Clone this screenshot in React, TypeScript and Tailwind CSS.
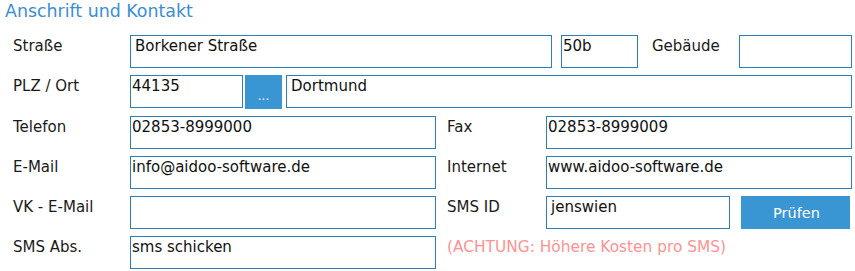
import React from "react";

const font = "font-['DejaVu_Sans',Verdana,sans-serif]";

const Box = ({ w, value, pad = "pl-[1px]" }: { w: string; value?: string; pad?: string }) => (
  <div className={`${w} h-[33px] shrink-0 border border-[#2f7db9] bg-white pt-[1px] ${pad} text-[15px] leading-[18px] text-[#111] whitespace-nowrap overflow-hidden`}>
    {value}
  </div>
);

const Label = ({ w, text }: { w: string; text: string }) => (
  <div className={`${w} shrink-0 pt-[2px] text-[15px] leading-[18px] text-[#1a1a1a]`}>{text}</div>
);

export default function App() {
  return (
    <div className={`w-[855px] h-[271px] bg-white ${font}`}>
      <div className="h-[35px] pl-[5px] pt-[1px] text-[17.4px] leading-[20px] text-[#3a8fd0]">
        Anschrift und Kontakt
      </div>

      <div className="flex flex-col gap-[7px] pl-[13px]">
        {/* Straße */}
        <div className="flex">
          <Label w="w-[117px]" text="Straße" />
          <Box w="w-[422px]" value="Borkener Straße" pad="pl-[4px]" />
          <div className="w-[9px]" />
          <Box w="w-[77px]" value="50b" pad="pl-[1px]" />
          <div className="w-[14px]" />
          <Label w="w-[87px]" text="Gebäude" />
          <Box w="w-[113px]" />
        </div>

        {/* PLZ / Ort */}
        <div className="flex">
          <Label w="w-[117px]" text="PLZ / Ort" />
          <Box w="w-[113px]" value="44135" />
          <div className="w-[2px]" />
          <div className="w-[37px] h-[34px] shrink-0 bg-[#3a95d3] pt-[13px] text-center text-[12px] leading-[16px] text-white">
            ...
          </div>
          <div className="w-[4px]" />
          <Box w="w-[566px]" value="Dortmund" pad="pl-[4px]" />
        </div>

        {/* Telefon / Fax */}
        <div className="flex">
          <Label w="w-[117px]" text="Telefon" />
          <Box w="w-[306px]" value="02853-8999000" />
          <div className="w-[11px]" />
          <Label w="w-[99px]" text="Fax" />
          <Box w="w-[306px]" value="02853-8999009" />
        </div>

        {/* E-Mail / Internet */}
        <div className="flex">
          <Label w="w-[117px]" text="E-Mail" />
          <Box w="w-[306px]" value="info@aidoo-software.de" />
          <div className="w-[11px]" />
          <Label w="w-[99px]" text="Internet" />
          <Box w="w-[306px]" value="www.aidoo-software.de" />
        </div>

        {/* VK - E-Mail / SMS ID */}
        <div className="flex">
          <Label w="w-[117px]" text="VK - E-Mail" />
          <Box w="w-[306px]" />
          <div className="w-[11px]" />
          <Label w="w-[99px]" text="SMS ID" />
          <Box w="w-[184px]" value="jenswien" pad="pl-[4px]" />
          <div className="w-[11px]" />
          <button className="w-[109px] h-[33px] shrink-0 bg-[#3a95d3] pl-[2px] text-[14.5px] leading-[18px] text-white">
            Prüfen
          </button>
        </div>

        {/* SMS Abs. */}
        <div className="flex">
          <Label w="w-[117px]" text="SMS Abs." />
          <Box w="w-[306px]" value="sms schicken" />
          <div className="w-[11px]" />
          <div className="pt-[2px] text-[15.4px] leading-[18px] text-[#ff9292] whitespace-nowrap">
            (ACHTUNG: Höhere Kosten pro SMS)
          </div>
        </div>
      </div>
    </div>
  );
}
